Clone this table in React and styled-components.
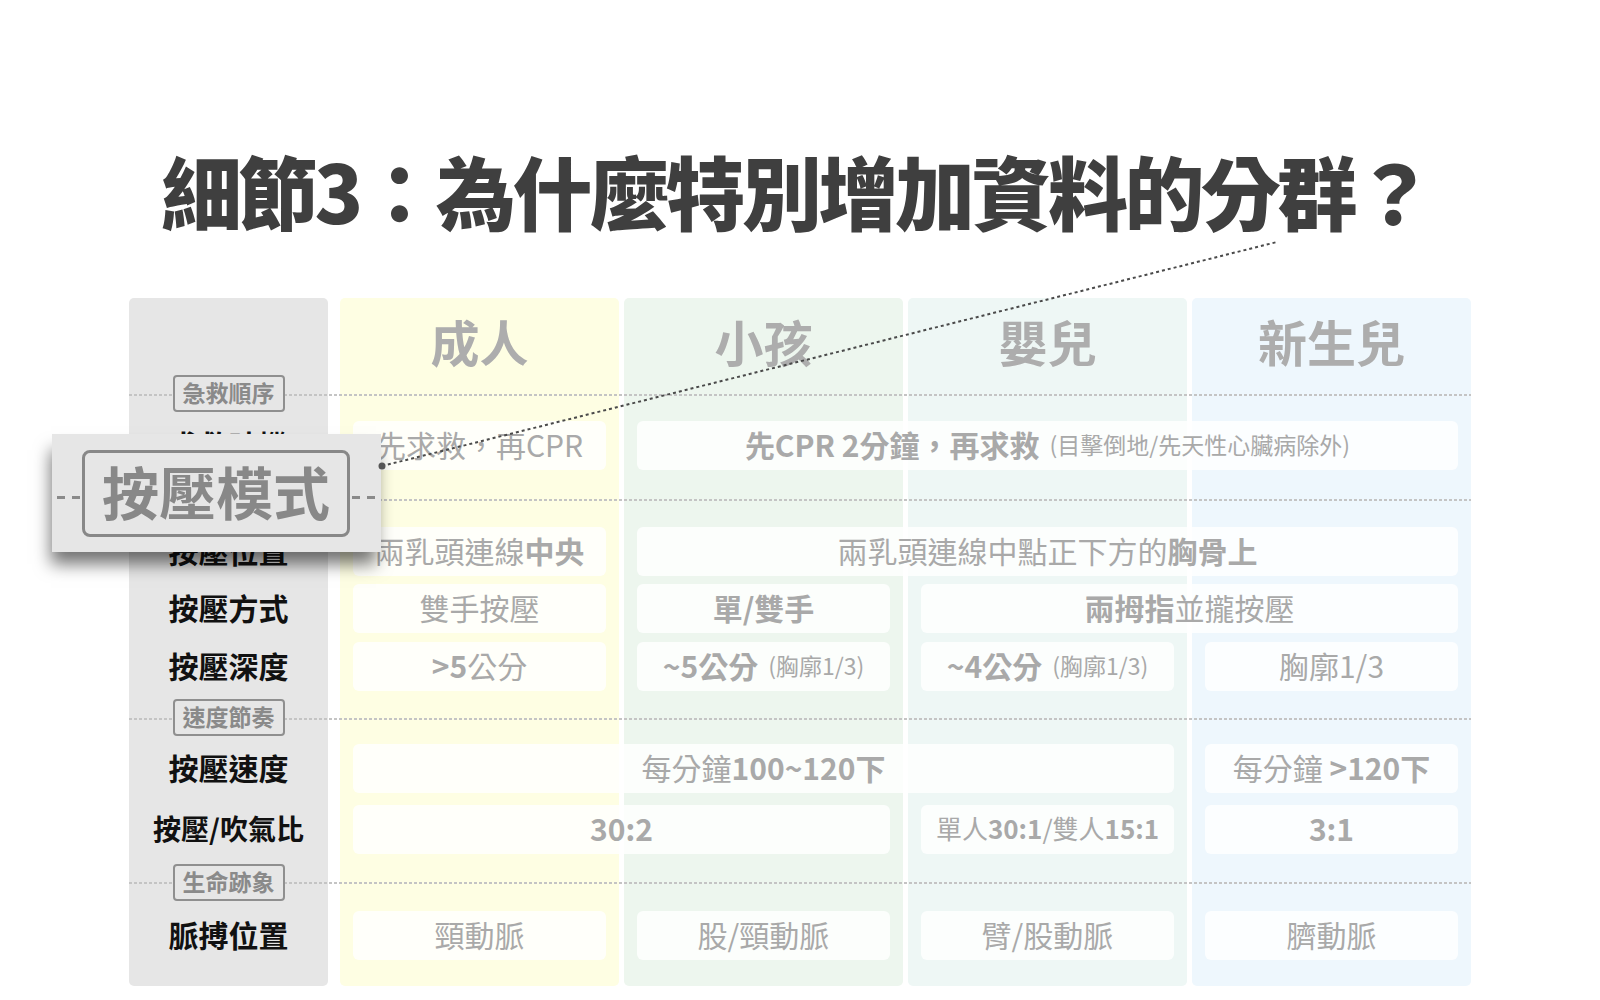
import React from "react";
import styled, { createGlobalStyle } from "styled-components";

const GlobalStyle = createGlobalStyle`
  body {
    margin: 0;
    background: #ffffff;
    font-family: "Noto Sans CJK TC", "Noto Sans", sans-serif;
  }
`;

const Page = styled.div`
  position: relative;
  width: 1600px;
  height: 1000px;
  display: flex;
  flex-direction: column;
  align-items: center;
  padding-top: 141px;
  box-sizing: border-box;
  overflow: hidden;
`;

const Title = styled.h1`
  margin: 0 8px 0 0;
  font-size: 80px;
  line-height: 96px;
  font-weight: 900;
  color: #3f3f3f;
  letter-spacing: -3.5px;
`;

const Table = styled.div`
  margin-top: 61px;
  display: grid;
  grid-template-columns: 206px repeat(4, 279px);
  grid-template-rows: 77px 37px 58px 57px 49px 57px 58px 53px 49px 61px 56px 50px 26px;
  column-gap: 5px;
`;

const ColumnBg = styled.div`
  grid-row: 1 / -1;
  grid-column: ${(p) => p.$col};
  width: ${(p) => (p.$col === 1 ? "199px" : "auto")};
  background: ${(p) => p.$bg};
  border-radius: 5px;
  z-index: 0;
`;

const Header = styled.div`
  grid-row: 1;
  grid-column: ${(p) => p.$col};
  align-self: start;
  padding-top: 19px;
  text-align: center;
  font-size: 49px;
  line-height: 48px;
  font-weight: 700;
  color: #adadad;
  z-index: 1;
`;

const GroupLine = styled.div`
  grid-row: ${(p) => p.$row};
  grid-column: 1 / -1;
  align-self: center;
  height: 2px;
  margin-top: 2px;
  background: repeating-linear-gradient(to right, #c4c4c4 0 3px, transparent 3px 5px);
  z-index: 1;
`;

const GroupLabelWrap = styled.div`
  grid-row: ${(p) => p.$row};
  grid-column: 1;
  width: 199px;
  display: flex;
  align-items: center;
  justify-content: center;
  z-index: 2;
`;

const GroupLabel = styled.span`
  display: inline-block;
  padding: 1px 8px 3px;
  border: 2px solid #8f8f8f;
  border-radius: 4px;
  background: #e6e6e6;
  font-size: 23px;
  line-height: 29px;
  font-weight: 700;
  color: #8a8a8a;
`;

const RowLabel = styled.div`
  grid-row: ${(p) => p.$row};
  grid-column: 1;
  width: 199px;
  height: 49px;
  box-sizing: border-box;
  padding-bottom: 4px;
  align-self: end;
  display: flex;
  align-items: center;
  justify-content: center;
  font-size: ${(p) => p.$size || 30}px;
  font-weight: 700;
  color: #111111;
  z-index: 2;
`;

const Cell = styled.div`
  grid-row: ${(p) => p.$row};
  grid-column: ${(p) => p.$col} / span ${(p) => p.$span};
  height: 49px;
  box-sizing: border-box;
  padding-bottom: 4px;
  align-self: end;
  margin: 0 13px;
  display: flex;
  align-items: center;
  justify-content: center;
  background: rgba(255, 255, 255, 0.82);
  border-radius: 6px;
  font-size: ${(p) => p.$size || 30}px;
  font-weight: 400;
  color: #a9a9a9;
  white-space: nowrap;
  z-index: 2;
`;

const B = styled.b`
  font-weight: 700;
`;

const Note = styled.span`
  margin-left: 10px;
  font-size: 23px;
  font-weight: 400;
`;

const Popup = styled.div`
  position: absolute;
  left: 52px;
  top: 434px;
  width: 329px;
  height: 118px;
  box-sizing: border-box;
  padding-left: 5px;
  display: flex;
  align-items: center;
  gap: 2px;
  background: #e6e6e6;
  box-shadow: -3px 14px 16px -2px rgba(0, 0, 0, 0.55);
  z-index: 5;
`;

const PopupDash = styled.div`
  flex: ${(p) => (p.$grow ? 1 : "0 0 23px")};
  height: 3px;
  margin-top: 8px;
  background: repeating-linear-gradient(to right, #8a8a8a 0 8px, transparent 8px 15px);
`;

const PopupBox = styled.div`
  width: 268px;
  height: 87px;
  box-sizing: border-box;
  padding-bottom: 6px;
  border: 3px solid #888888;
  border-radius: 8px;
  display: flex;
  align-items: center;
  justify-content: center;
  font-size: 57px;
  font-weight: 700;
  color: #888888;
`;

const Connector = styled.svg`
  position: absolute;
  left: 0;
  top: 0;
  pointer-events: none;
  z-index: 6;
`;

const columns = [
  { col: 1, bg: "#e6e6e6" },
  { col: 2, bg: "#fefee3", title: "成人" },
  { col: 3, bg: "#edf6ee", title: "小孩" },
  { col: 4, bg: "#eef7f5", title: "嬰兒" },
  { col: 5, bg: "#eef7fd", title: "新生兒" },
];

const groups = [
  { row: 2, label: "急救順序" },
  { row: 4, label: "按壓模式" },
  { row: 8, label: "速度節奏" },
  { row: 11, label: "生命跡象" },
];

const rows = [
  {
    row: 3,
    label: "求救時機",
    cells: [
      { col: 2, span: 1, content: <>先求救，再CPR</> },
      {
        col: 3,
        span: 3,
        content: (
          <>
            <B>先CPR 2分鐘，再求救</B>
            <Note>(目擊倒地/先天性心臟病除外)</Note>
          </>
        ),
      },
    ],
  },
  {
    row: 5,
    label: "按壓位置",
    cells: [
      { col: 2, span: 1, content: <>兩乳頭連線<B>中央</B></> },
      { col: 3, span: 3, content: <>兩乳頭連線中點正下方的<B>胸骨上</B></> },
    ],
  },
  {
    row: 6,
    label: "按壓方式",
    cells: [
      { col: 2, span: 1, content: <>雙手按壓</> },
      { col: 3, span: 1, content: <B>單/雙手</B> },
      { col: 4, span: 2, content: <><B>兩拇指</B>並攏按壓</> },
    ],
  },
  {
    row: 7,
    label: "按壓深度",
    cells: [
      { col: 2, span: 1, content: <><B>&gt;5</B>公分</> },
      { col: 3, span: 1, content: <><B>~5公分</B><Note>(胸廓1/3)</Note></> },
      { col: 4, span: 1, content: <><B>~4公分</B><Note>(胸廓1/3)</Note></> },
      { col: 5, span: 1, content: <>胸廓1/3</> },
    ],
  },
  {
    row: 9,
    label: "按壓速度",
    cells: [
      { col: 2, span: 3, content: <>每分鐘<B>100~120下</B></> },
      { col: 5, span: 1, content: <>每分鐘{"\u00a0"}<B>&gt;120下</B></> },
    ],
  },
  {
    row: 10,
    label: "按壓/吹氣比",
    labelSize: 28,
    cells: [
      { col: 2, span: 2, content: <B>30:2</B> },
      { col: 4, span: 1, size: 26, content: <>單人<B>30:1</B>/雙人<B>15:1</B></> },
      { col: 5, span: 1, content: <B>3:1</B> },
    ],
  },
  {
    row: 12,
    label: "脈搏位置",
    cells: [
      { col: 2, span: 1, content: <>頸動脈</> },
      { col: 3, span: 1, content: <>股/頸動脈</> },
      { col: 4, span: 1, content: <>臂/股動脈</> },
      { col: 5, span: 1, content: <>臍動脈</> },
    ],
  },
];

export default function App() {
  return (
    <>
      <GlobalStyle />
      <Page>
        <Title>細節3：為什麼特別增加資料的分群？</Title>
        <Table>
          {columns.map((c) => (
            <ColumnBg key={c.col} $col={c.col} $bg={c.bg} />
          ))}
          {columns
            .filter((c) => c.title)
            .map((c) => (
              <Header key={c.col} $col={c.col}>
                {c.title}
              </Header>
            ))}
          {groups.map((g) => (
            <React.Fragment key={g.row}>
              <GroupLine $row={g.row} />
              <GroupLabelWrap $row={g.row}>
                <GroupLabel>{g.label}</GroupLabel>
              </GroupLabelWrap>
            </React.Fragment>
          ))}
          {rows.map((r) => (
            <React.Fragment key={r.row}>
              <RowLabel $row={r.row} $size={r.labelSize}>
                {r.label}
              </RowLabel>
              {r.cells.map((c) => (
                <Cell key={c.col} $row={r.row} $col={c.col} $span={c.span} $size={c.size}>
                  {c.content}
                </Cell>
              ))}
            </React.Fragment>
          ))}
        </Table>

        <Popup>
          <PopupDash />
          <PopupBox>按壓模式</PopupBox>
          <PopupDash $grow />
        </Popup>

        <Connector width="1600" height="1000" viewBox="0 0 1600 1000">
          <line
            x1="382"
            y1="466"
            x2="1277"
            y2="242"
            stroke="#4a4a4a"
            strokeWidth="2"
            strokeDasharray="3 3"
          />
          <circle cx="382" cy="466" r="3.5" fill="#555555" />
        </Connector>
      </Page>
    </>
  );
}
